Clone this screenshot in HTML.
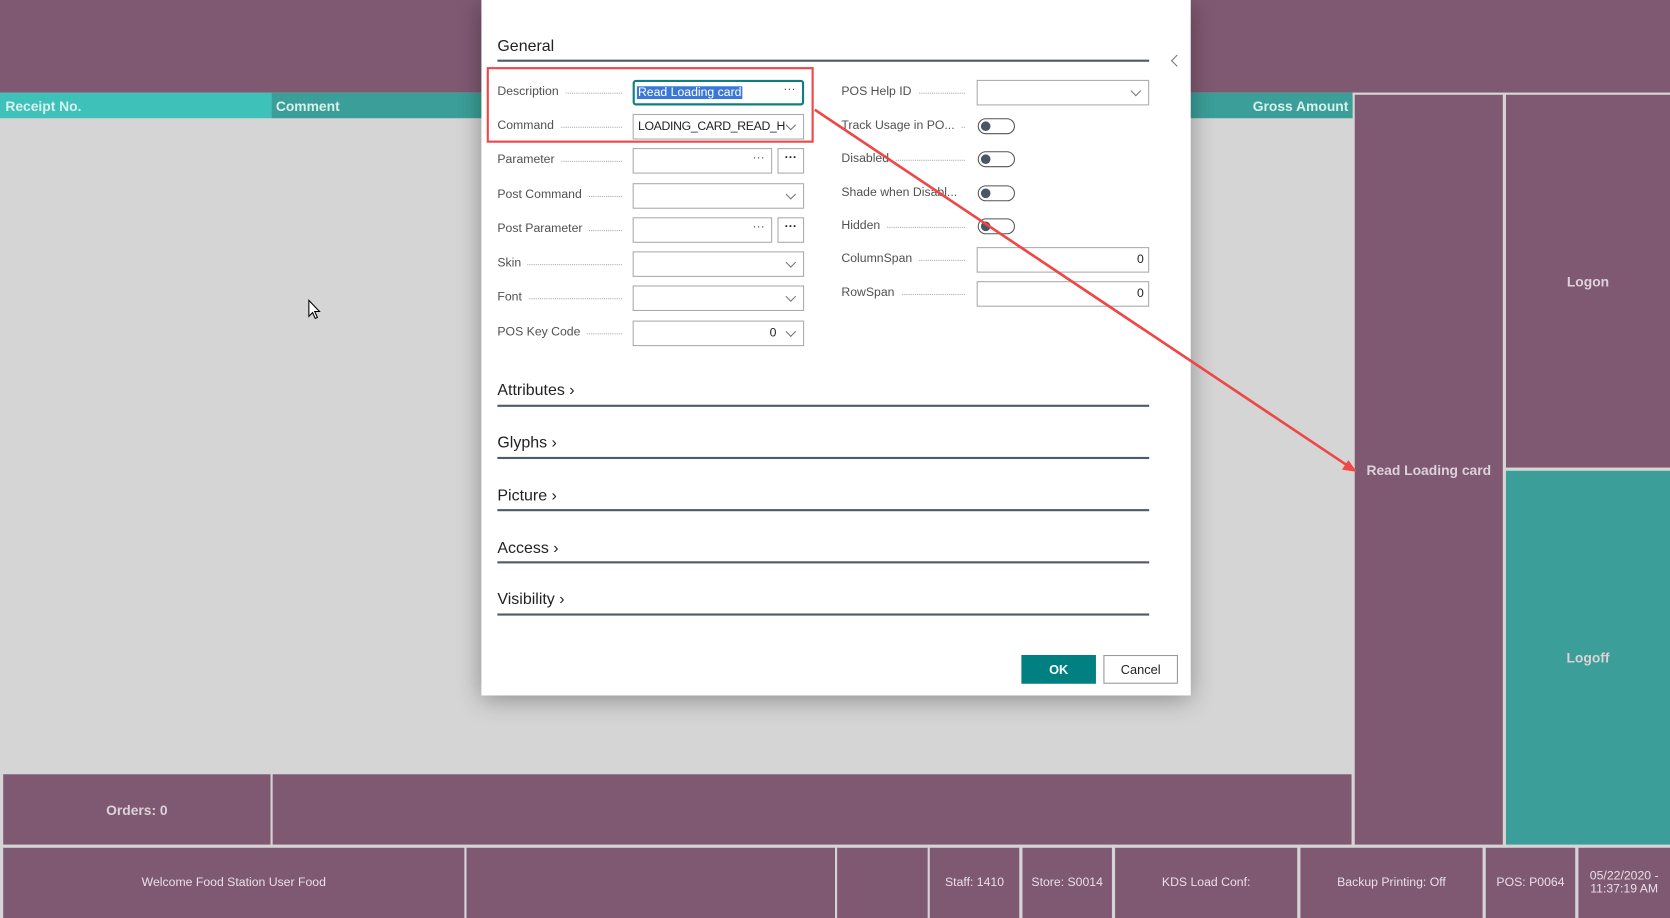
<!DOCTYPE html>
<html><head><meta charset="utf-8"><style>
*{box-sizing:border-box;margin:0;padding:0}
html,body{width:1670px;height:918px;overflow:hidden;background:#d5d5d5}
#w{position:absolute;left:0;top:0;width:1568px;height:862px;transform:scale(1.06505);transform-origin:0 0;font-family:"Liberation Sans",sans-serif}
.a{position:absolute}
.p{background:#7f5972}
.t{color:#dcd2da;font-weight:bold;font-size:13px;display:flex;align-items:center;justify-content:center;text-align:center}
.s{color:#e8e0e6;font-size:11.5px;display:flex;align-items:center;justify-content:center;text-align:center;background:#7f5972}
.lbl{position:absolute;font-size:11.5px;color:#505050;white-space:nowrap;background:#fff;padding-right:6px;z-index:2}
.dots{position:absolute;border-bottom:1px dotted #aaa;height:1px;z-index:1}
.in{position:absolute;height:24px;border:1px solid #aaa;background:#fff;font-size:11.5px;color:#222;overflow:hidden;white-space:nowrap}
.chev{position:absolute;right:8px;top:6px;width:7px;height:7px;border-right:1px solid #777;border-bottom:1px solid #777;transform:rotate(45deg);background:#fff}
.tg{position:absolute;width:35px;height:15px;border:1.5px solid #555;border-radius:8px}
.tg:after{content:"";position:absolute;left:2px;top:1.5px;width:9px;height:9px;border-radius:50%;background:#4b5566}
.sec{position:absolute;left:467px;font-size:15px;color:#222}
.ln{position:absolute;left:467px;width:612px;height:2px;background:#505a68}
</style></head><body><div id="w">
<div class="a p" style="left:0;top:0;width:1568px;height:87px"></div>
<div class="a" style="left:0;top:87px;width:255px;height:24px;background:#3ec1b9;color:#d8f0ee;font-weight:bold;font-size:13px;padding:5px 5px">Receipt No.</div>
<div class="a" style="left:255px;top:87px;width:1015px;height:24px;background:#3b9e98;color:#d8f0ee;font-weight:bold;font-size:13px;padding:5px 4px">Comment</div>
<div class="a" style="left:1118px;top:87px;width:152px;height:24px;color:#d8f0ee;font-weight:bold;font-size:13px;padding:5px 4px;text-align:right">Gross Amount</div>
<div class="a" style="left:1270px;top:87px;width:298px;height:3px;background:#d5d5d5"></div>
<div class="a p t" style="left:1272px;top:89px;width:139px;height:704px">Read Loading card</div>
<div class="a p t" style="left:1414px;top:89px;width:154px;height:350px">Logon</div>
<div class="a t" style="left:1414px;top:442px;width:154px;height:351px;background:#3b9e98">Logoff</div>
<div class="a p t" style="left:3px;top:727px;width:251px;height:66px">Orders: 0</div>
<div class="a p" style="left:256px;top:727px;width:1013px;height:66px"></div>
<div class="a s" style="left:3px;top:796px;width:433px;height:66px">Welcome Food Station User Food</div>
<div class="a s" style="left:438px;top:796px;width:346px;height:66px"></div>
<div class="a s" style="left:786px;top:796px;width:85px;height:66px"></div>
<div class="a s" style="left:873px;top:796px;width:84px;height:66px">Staff: 1410</div>
<div class="a s" style="left:960px;top:796px;width:84px;height:66px">Store: S0014</div>
<div class="a s" style="left:1047px;top:796px;width:171px;height:66px">KDS Load Conf:</div>
<div class="a s" style="left:1221px;top:796px;width:171px;height:66px">Backup Printing: Off</div>
<div class="a s" style="left:1395px;top:796px;width:84px;height:66px">POS: P0064</div>
<div class="a s" style="left:1482px;top:796px;width:86px;height:66px">05/22/2020 -<br>11:37:19 AM</div>

<div class="a" style="left:452px;top:0;width:666px;height:653px;background:#fff;box-shadow:0 4px 22px rgba(0,0,0,.35)"></div>
<div class="a" style="left:467px;top:35px;font-size:15px;color:#222">General</div>
<div class="ln" style="top:56px"></div>
<div class="a" style="left:1101px;top:53px;width:8px;height:8px;border-left:1px solid #777;border-bottom:1px solid #777;transform:rotate(45deg)"></div>

<div class="lbl" style="left:467px;top:80px">Description</div><div class="dots" style="left:530px;top:87px;width:54px"></div>
<div class="in" style="left:594px;top:75px;width:161px;border:2px solid #0f7e80;border-radius:3px"><span style="position:absolute;left:2px;top:4px;background:#3a78d8;color:#fff;padding:0 1px">Read Loading card</span><span style="position:absolute;right:6px;top:1px;color:#555">···</span></div>
<div class="lbl" style="left:467px;top:112px">Command</div><div class="dots" style="left:520px;top:119px;width:64px"></div>
<div class="in" style="left:594px;top:107px;width:161px;padding:5px 4px;letter-spacing:-0.3px">LOADING_CARD_READ_H<div class="chev"></div></div>
<div class="lbl" style="left:467px;top:144px">Parameter</div><div class="dots" style="left:520px;top:151px;width:64px"></div>
<div class="in" style="left:594px;top:139px;width:131px"><span style="position:absolute;right:6px;top:2px;color:#555">···</span></div>
<div class="in" style="left:730px;top:139px;width:25px;text-align:center;padding-top:2px;font-weight:bold">···</div>
<div class="lbl" style="left:467px;top:177px">Post Command</div><div class="dots" style="left:540px;top:184px;width:44px"></div>
<div class="in" style="left:594px;top:172px;width:161px"><div class="chev"></div></div>
<div class="lbl" style="left:467px;top:209px">Post Parameter</div><div class="dots" style="left:540px;top:216px;width:44px"></div>
<div class="in" style="left:594px;top:204px;width:131px"><span style="position:absolute;right:6px;top:2px;color:#555">···</span></div>
<div class="in" style="left:730px;top:204px;width:25px;text-align:center;padding-top:2px;font-weight:bold">···</div>
<div class="lbl" style="left:467px;top:241px">Skin</div><div class="dots" style="left:490px;top:248px;width:94px"></div>
<div class="in" style="left:594px;top:236px;width:161px"><div class="chev"></div></div>
<div class="lbl" style="left:467px;top:273px">Font</div><div class="dots" style="left:490px;top:280px;width:94px"></div>
<div class="in" style="left:594px;top:268px;width:161px"><div class="chev"></div></div>
<div class="lbl" style="left:467px;top:306px">POS Key Code</div><div class="dots" style="left:540px;top:313px;width:44px"></div>
<div class="in" style="left:594px;top:301px;width:161px"><span style="position:absolute;right:25px;top:5px">0</span><div class="chev"></div></div>

<div class="lbl" style="left:790px;top:80px">POS Help ID</div><div class="dots" style="left:850px;top:87px;width:56px"></div>
<div class="in" style="left:917px;top:75px;width:162px"><div class="chev"></div></div>
<div class="lbl" style="left:790px;top:112px">Track Usage in PO...</div><div class="dots" style="left:890px;top:119px;width:16px"></div>
<div class="tg" style="left:918px;top:111px"></div>
<div class="lbl" style="left:790px;top:143px">Disabled</div><div class="dots" style="left:830px;top:150px;width:76px"></div>
<div class="tg" style="left:918px;top:142px"></div>
<div class="lbl" style="left:790px;top:175px">Shade when Disabl...</div>
<div class="tg" style="left:918px;top:174px"></div>
<div class="lbl" style="left:790px;top:206px">Hidden</div><div class="dots" style="left:830px;top:213px;width:76px"></div>
<div class="tg" style="left:918px;top:205px"></div>
<div class="lbl" style="left:790px;top:237px">ColumnSpan</div><div class="dots" style="left:850px;top:244px;width:56px"></div>
<div class="in" style="left:917px;top:232px;width:162px"><span style="position:absolute;right:4px;top:5px">0</span></div>
<div class="lbl" style="left:790px;top:269px">RowSpan</div><div class="dots" style="left:840px;top:276px;width:66px"></div>
<div class="in" style="left:917px;top:264px;width:162px"><span style="position:absolute;right:4px;top:5px">0</span></div>

<div class="sec" style="top:358px">Attributes ›</div><div class="ln" style="top:380px"></div>
<div class="sec" style="top:407px">Glyphs ›</div><div class="ln" style="top:429px"></div>
<div class="sec" style="top:457px">Picture ›</div><div class="ln" style="top:478px"></div>
<div class="sec" style="top:506px">Access ›</div><div class="ln" style="top:527px"></div>
<div class="sec" style="top:554px">Visibility ›</div><div class="ln" style="top:576px"></div>

<div class="a" style="left:959px;top:615px;width:70px;height:27px;background:#008080;color:#fff;font-weight:bold;font-size:12px;display:flex;align-items:center;justify-content:center">OK</div>
<div class="a" style="left:1036px;top:615px;width:70px;height:27px;border:1px solid #999;background:#fff;color:#222;font-size:12px;display:flex;align-items:center;justify-content:center">Cancel</div>

<div class="a" style="left:457px;top:63px;width:307px;height:71px;border:2px solid #f04646;z-index:3"></div>
<svg class="a" style="left:0;top:0;z-index:4" width="1568" height="862"><line x1="765" y1="103" x2="1268" y2="439" stroke="#f04646" stroke-width="2.5"/><polygon points="1274,443 1260,441 1266,432" fill="#f04646"/></svg>
<svg class="a" style="left:288px;top:281px" width="14" height="20"><path d="M2 1 L2 16 L5.5 12.5 L8 18 L10 17 L7.5 11.5 L12 11.5 Z" fill="#fff" stroke="#000" stroke-width="1"/></svg>
</div></body></html>
